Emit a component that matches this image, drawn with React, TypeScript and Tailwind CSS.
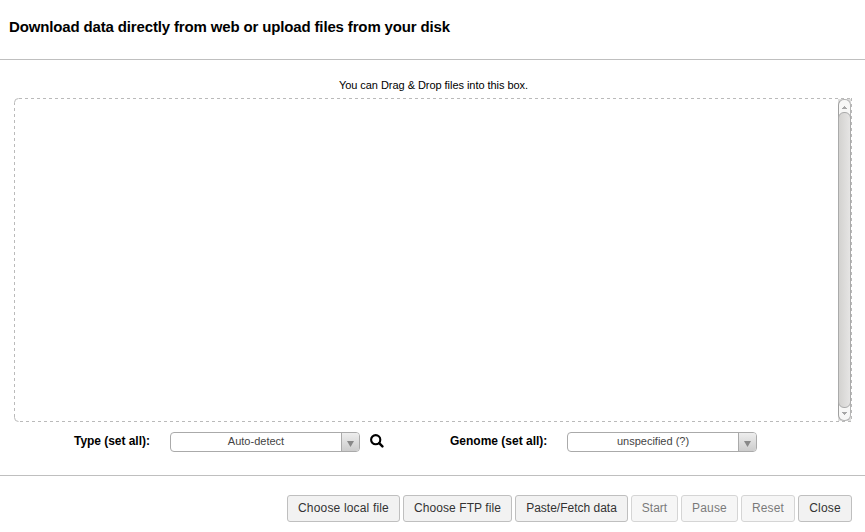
import React from "react";

function Select({ value }: { value: string }) {
  return (
    <div className="flex h-5 w-[190px] overflow-hidden rounded-[4px] border border-[#aaa] bg-white text-[11px] leading-[17px] text-[#444]">
      <span className="flex-1 text-center">{value}</span>
      <span className="flex w-[18px] items-center justify-center border-l border-[#aaa] bg-linear-to-b from-[#eee] to-[#ccc]">
        <svg width="7" height="6" viewBox="0 0 7 6" className="mt-[3px] -ml-px" aria-hidden="true">
          <path d="M0 0H7L3.5 6Z" fill="#888" />
        </svg>
      </span>
    </div>
  );
}

function SearchIcon() {
  return (
    <svg width="14" height="14" viewBox="0 0 14 14" fill="none" stroke="#000" aria-hidden="true">
      <circle cx="5.700" cy="5.700" r="4.600" strokeWidth="2.100" />
      <path d="M9.200 9.200L12.400 12.300" strokeWidth="2.500" strokeLinecap="round" />
    </svg>
  );
}

function Scrollbar() {
  return (
    <div className="flex h-[322px] w-[13px] flex-col bg-[#dededd]">
      <div className="flex h-full flex-col rounded-[6px] border border-[#b4b4b4] border-l-[#a0a0a0] bg-[#f7f7f6]">
        <div className="flex h-3 items-center justify-center">
          <svg width="5" height="3" viewBox="0 0 5 3" className="mt-[2px]" aria-hidden="true">
            <path d="M0 3V2H1V1H2V0H3V1H4V2H5V3Z" fill="#a6a6a6" />
          </svg>
        </div>
        <div className="-mx-px flex-1 rounded-[6px] border border-[#aaa] bg-linear-to-r from-[#d3d2d0] to-[#e6e5e4]" />
        <div className="flex h-3 items-center justify-center">
          <svg width="5" height="3" viewBox="0 0 5 3" className="mb-px" aria-hidden="true">
            <path d="M0 0V1H1V2H2V3H3V2H4V1H5V0Z" fill="#a6a6a6" />
          </svg>
        </div>
      </div>
    </div>
  );
}

function DropZone() {
  return (
    <div className="relative ml-[14px] flex h-[324px] w-[838px] justify-end p-px">
      <Scrollbar />
      <svg
        width="838"
        height="324"
        viewBox="0 0 838 324"
        fill="none"
        stroke="#bababa"
        className="pointer-events-none absolute inset-0"
        aria-hidden="true"
      >
        <path d="M.5 7V4.500Q.5.5 4.500.5M.5 317V319.500Q.5 323.500 4.500 323.500" />
        <path d="M5 .5H838M6 323.500H838M.5 10V317M837.500 0V324" strokeDasharray="3 3" />
      </svg>
    </div>
  );
}

const buttons = [
  { label: "Choose local file", style: "w-[113px] tracking-[0.17px]", disabled: false },
  { label: "Choose FTP file", style: "w-[109px] tracking-[0.07px]", disabled: false },
  { label: "Paste/Fetch data", style: "w-[113px]", disabled: false },
  { label: "Start", style: "w-[47px]", disabled: true },
  { label: "Pause", style: "w-[57px] tracking-[0.15px]", disabled: true },
  { label: "Reset", style: "w-[54px] tracking-[0.1px]", disabled: true },
  { label: "Close", style: "w-[54px] tracking-[0.15px]", disabled: false },
];

export default function App() {
  return (
    <div className="flex h-[532px] w-[865px] flex-col overflow-hidden bg-white font-['Liberation_Sans',Arial,sans-serif] text-black">
      <header className="h-[60px] border-b border-[#bfbfbf] pt-[17px] pl-[9px]">
        <h1 className="text-[15px] leading-5 font-bold tracking-[-0.147px]">
          Download data directly from web or upload files from your disk
        </h1>
      </header>
      <main className="h-[416px] border-b border-[#bfbfbf] pt-[18px]">
        <p className="h-5 pl-[2px] text-center text-[11px] leading-[15px] tracking-[-0.045px]">
          You can Drag &amp; Drop files into this box.
        </p>
        <DropZone />
        <div className="flex h-5 pt-[10px] pl-[74px] text-[12px]">
          <label className="w-24 shrink-0 leading-[18px] font-bold tracking-[-0.04px]">Type (set all):</label>
          <Select value="Auto-detect" />
          <span className="mt-[2px] ml-[10px] w-20">
            <SearchIcon />
          </span>
          <label className="w-[117px] shrink-0 leading-[18px] font-bold">Genome (set all):</label>
          <Select value="unspecified (?)" />
        </div>
      </main>
      <footer className="flex justify-end gap-[3px] pt-[19px] pr-[13px]">
        {buttons.map(({ label, style, disabled }) => (
          <button
            key={label}
            disabled={disabled}
            className={`${style} h-[27px] rounded-[3px] border border-[#bfbfbf] bg-[#f2f2f2] px-0 pb-px text-[12px] leading-[18px] whitespace-nowrap text-[#333] disabled:opacity-65`}
          >
            {label}
          </button>
        ))}
      </footer>
    </div>
  );
}
